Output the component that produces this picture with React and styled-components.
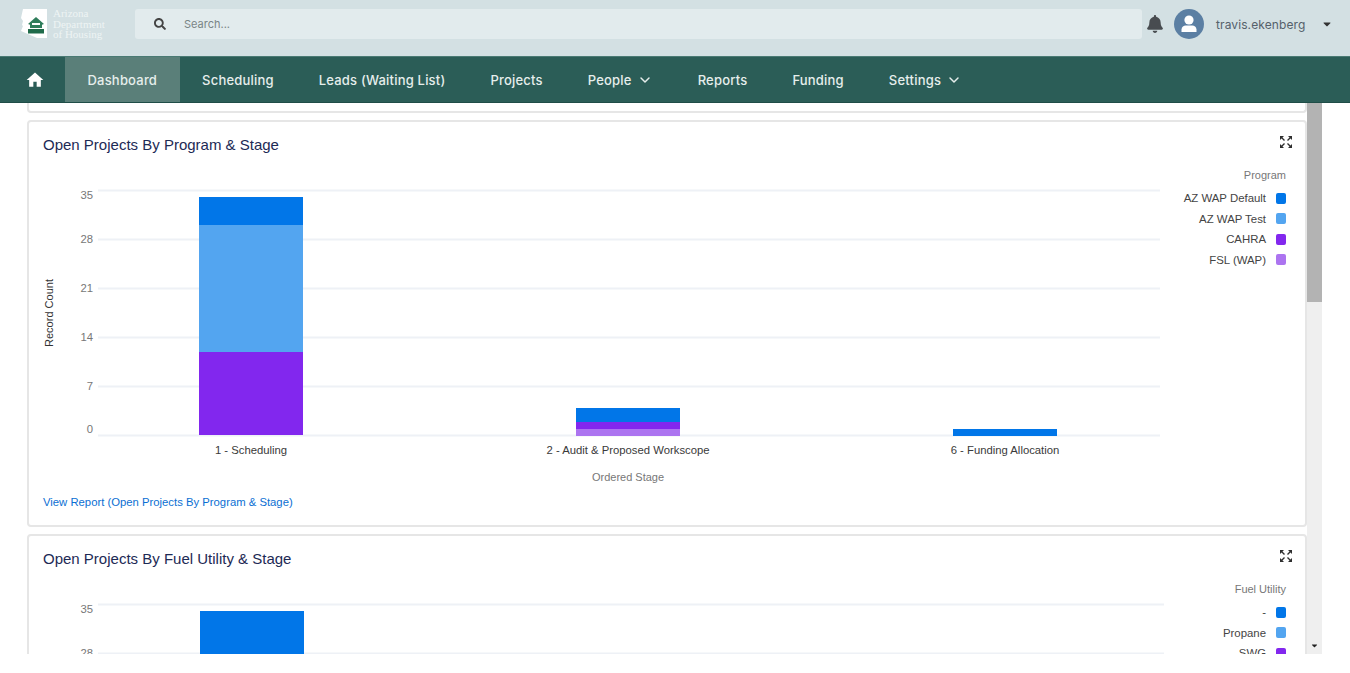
import React from 'react'
import styled, { createGlobalStyle } from 'styled-components'
import { FaSearch, FaBell, FaCaretDown } from 'react-icons/fa'
import { MdHome } from 'react-icons/md'
import { ChevronDown } from 'lucide-react'

const BLUE = '#0176e8'
const LIGHT = '#53a5f0'
const PURPLE = '#8227ee'
const LILAC = '#ac74f0'

const NAV = [
  { label: 'Dashboard', active: true },
  { label: 'Scheduling' },
  { label: 'Leads (Waiting List)' },
  { label: 'Projects' },
  { label: 'People', menu: true },
  { label: 'Reports' },
  { label: 'Funding' },
  { label: 'Settings', menu: true },
]

const CHARTS = [
  {
    title: 'Open Projects By Program & Stage',
    legendTitle: 'Program',
    legend: [
      ['AZ WAP Default', BLUE],
      ['AZ WAP Test', LIGHT],
      ['CAHRA', PURPLE],
      ['FSL (WAP)', LILAC],
    ],
    gridEnd: 1131,
    barShift: 0,
    bars: [
      { x: 170, label: '1 - Scheduling', parts: [[32, 28, BLUE], [60, 127, LIGHT], [187, 83, PURPLE]] },
      { x: 547, label: '2 - Audit & Proposed Workscope', parts: [[243, 14, BLUE], [257, 7, PURPLE], [264, 7, LILAC]] },
      { x: 924, label: '6 - Funding Allocation', parts: [[264, 7, BLUE]] },
    ],
    link: 'View Report (Open Projects By Program & Stage)',
  },
  {
    title: 'Open Projects By Fuel Utility & Stage',
    legendTitle: 'Fuel Utility',
    legend: [
      ['-', BLUE],
      ['Propane', LIGHT],
      ['SWG', PURPLE],
    ],
    gridEnd: 1135,
    barShift: 1,
    bars: [{ x: 170, label: '1 - Scheduling', parts: [[32, 238, BLUE]] }],
    link: 'View Report (Open Projects By Fuel Utility & Stage)',
  },
]

const GRID = [
  [25, '35', 34],
  [74, '28', 78],
  [123, '21', 127],
  [172, '14', 176],
  [221, '7', 225],
  [270, '0', 268],
]

const Logo = () => (
  <LogoWrap>
    <svg width='28' height='30' viewBox='0 0 28 30'>
      <path d='M3 0h24v29H17L1 22l2-5-1-1 1-4-2-3z' fill='#fff' />
      <path d='M8 15l8-7 8 7-2 .8V19H10v-3.200z' fill='#2f7d5b' />
      <path d='M12 14h8v2h-8z' fill='#fff' />
      <path d='M8 20h16v4.500H8z' fill='#1f6b4a' />
    </svg>
    <LogoText>
      Arizona
      <br />
      Department
      <br />
      of Housing
    </LogoText>
  </LogoWrap>
)

const Avatar = () => (
  <svg width='30' height='30' viewBox='0 0 30 30'>
    <circle cx='15' cy='15' r='15' fill='#5b7fa3' />
    <circle cx='15' cy='11' r='4.6' fill='#fff' />
    <path d='M7.500 23v-2.500c0-2.600 2.500-4 4-4h7c1.500 0 4 1.400 4 4V23z' fill='#fff' />
  </svg>
)

const ExpandIcon = () => (
  <svg width='12' height='12' viewBox='0 0 12 12' fill='#2f2f2f' stroke='#2f2f2f'>
    <path d='M0 0h4L0 4zM12 0v4L8 0zM0 12V8l4 4zM12 12H8l4-4z' stroke='none' />
    <path d='M1 1l3.500 3.500M11 1L7.500 4.500M1 11l3.500-3.500M11 11L7.500 7.500' strokeWidth='1.400' />
  </svg>
)

const BarChart = ({ bars, gridEnd, barShift }) => (
  <ChartSvg viewBox='0 0 1150 322'>
    {GRID.map(([y, label, labelY]) => (
      <g key={y}>
        <line x1='69' x2={gridEnd} y1={y + 0.5} y2={y + 0.5} stroke='#eef1f6' strokeWidth='2' />
        <text x='64' y={labelY} textAnchor='end' fontSize='11.3' fill='#777'>
          {label}
        </text>
      </g>
    ))}
    {bars.map((bar) => (
      <g key={bar.label}>
        {bar.parts.map(([y, h, color]) => (
          <rect key={y} x={bar.x + barShift} y={y} width='104' height={h} fill={color} />
        ))}
        <text x={bar.x + barShift + 52} y='289' textAnchor='middle' fontSize='11.3' fill='#3a3a3a'>
          {bar.label}
        </text>
      </g>
    ))}
    <text x='599' y='316' textAnchor='middle' fontSize='11' fill='#777'>
      Ordered Stage
    </text>
    <text transform='translate(24 148) rotate(-90)' textAnchor='middle' fontSize='11' fill='#333'>
      Record Count
    </text>
  </ChartSvg>
)

const App = () => {
  return (
    <Page>
      <GlobalStyle />
      <Header>
        <Logo />
        <SearchBar>
          <FaSearch size={12} color='#444' />
          <span>Search...</span>
        </SearchBar>
        <FaBell size={18} color='#484c50' />
        <AvatarSlot>
          <Avatar />
        </AvatarSlot>
        <UserName>travis.ekenberg</UserName>
        <FaCaretDown size={12} color='#333' />
      </Header>
      <Nav>
        <HomeItem>
          <MdHome size={20} color='#fff' />
        </HomeItem>
        {NAV.map((item) => (
          <NavItem key={item.label} $active={item.active}>
            {item.label}
            {item.menu && <ChevronDown size={16} strokeWidth={2.2} />}
          </NavItem>
        ))}
      </Nav>
      <Body>
        <Scroller>
          <CutCard />
          {CHARTS.map((chart) => (
            <Card key={chart.title}>
              <CardHead>
                <h2>{chart.title}</h2>
                <ExpandIcon />
              </CardHead>
              <ChartRow>
                <BarChart {...chart} />
                <Legend>
                  <h3>{chart.legendTitle}</h3>
                  {chart.legend.map(([name, color]) => (
                    <LegendRow key={name}>
                      {name}
                      <Swatch $color={color} />
                    </LegendRow>
                  ))}
                </Legend>
              </ChartRow>
              <ReportLink href='#'>{chart.link}</ReportLink>
            </Card>
          ))}
        </Scroller>
        <ScrollTrack>
          <ScrollThumb />
          <FaCaretDown size={9} color='#222' />
        </ScrollTrack>
      </Body>
    </Page>
  )
}

const GlobalStyle = createGlobalStyle`
  * {
    box-sizing: border-box;
  }
  html, body {
    margin: 0;
    background: #fff;
  }
`

const Page = styled.div`
  width: 1350px;
  height: 654px;
  display: flex;
  flex-direction: column;
  overflow: hidden;
  font-family: 'Liberation Sans', Arial, sans-serif;
`

const Header = styled.header`
  height: 56px;
  flex: none;
  display: flex;
  align-items: center;
  padding: 0 17px 8px 20px;
  background: #d3e0e3;
  svg {
    flex: none;
  }
`

const LogoWrap = styled.div`
  flex: none;
  width: 115px;
  display: flex;
  align-items: center;
  gap: 5px;
`

const LogoText = styled.div`
  font-family: 'Liberation Serif', serif;
  font-size: 11px;
  line-height: 10.5px;
  color: #eef4f4;
`

const SearchBar = styled.div`
  flex: none;
  width: 1007px;
  height: 30px;
  display: flex;
  align-items: center;
  gap: 18px;
  padding-left: 19px;
  margin-right: 4px;
  border-radius: 3px;
  background: #e2ebed;
  font-family: Inter, sans-serif;
  font-size: 11px;
  color: #7a8586;
`

const AvatarSlot = styled.div`
  display: flex;
  margin-left: 10px;
`

const UserName = styled.span`
  flex: none;
  width: 105px;
  margin-left: 12px;
  font-family: Inter, sans-serif;
  font-size: 12px;
  letter-spacing: 0.1px;
  color: #55616b;
  white-space: nowrap;
`

const Nav = styled.nav`
  height: 47px;
  flex: none;
  display: flex;
  background: #2b5d57;
  border-top: 1px solid #4a7a74;
  border-bottom: 1px solid #1f4d47;
`

const HomeItem = styled.div`
  width: 65px;
  padding-left: 4px;
  display: flex;
  align-items: center;
  justify-content: center;
`

const NavItem = styled.a`
  display: flex;
  align-items: center;
  gap: 5px;
  padding: 0 22.500px;
  background: ${(p) => (p.$active ? '#5a7f79' : 'transparent')};
  font-family: Inter, sans-serif;
  font-size: 13px;
  font-weight: 500;
  letter-spacing: 0.2px;
  color: #e6eeec;
  white-space: nowrap;
`

const Body = styled.main`
  flex: 1;
  min-height: 0;
  display: flex;
`

const Scroller = styled.div`
  width: 1307px;
  padding-left: 27px;
  overflow: hidden;
  display: flex;
  flex-direction: column;
  gap: 7px;
`

const CutCard = styled.div`
  flex: none;
  height: 10px;
  background: #fff;
  border: 2px solid #e6e6e6;
  border-top: 0;
  border-radius: 0 0 4px 4px;
`

const Card = styled.section`
  flex: none;
  height: 407px;
  display: flex;
  flex-direction: column;
  border: 2px solid #e6e6e6;
  border-radius: 4px;
  background: #fff;
`

const CardHead = styled.div`
  height: 43px;
  flex: none;
  display: flex;
  justify-content: space-between;
  align-items: flex-start;
  padding: 14px 13px 0 14px;
  h2 {
    margin: 0;
    font-size: 15px;
    line-height: 18px;
    font-weight: 400;
    color: #1d2a55;
  }
`

const ChartRow = styled.div`
  flex: none;
  display: flex;
  height: 322px;
`

const ChartSvg = styled.svg`
  width: 1150px;
  height: 322px;
  flex: none;
  font-family: 'Liberation Sans', Arial, sans-serif;
`

const Legend = styled.aside`
  flex: 1;
  padding-right: 19px;
  display: flex;
  flex-direction: column;
  align-items: flex-end;
  font-size: 11.4px;
  color: #444;
  h3 {
    margin: 3px 0 6px;
    font-size: 11px;
    line-height: 14px;
    font-weight: 400;
    color: #777;
  }
`

const LegendRow = styled.div`
  height: 20.500px;
  display: flex;
  align-items: center;
  gap: 10px;
  white-space: nowrap;
`

const Swatch = styled.i`
  width: 10px;
  height: 11px;
  border-radius: 2px;
  background: ${(p) => p.$color};
`

const ReportLink = styled.a`
  margin: 8px 0 0 14px;
  font-size: 11.3px;
  line-height: 14px;
  color: #0b6fd3;
  text-decoration: none;
`

const ScrollTrack = styled.div`
  position: relative;
  width: 15px;
  flex: none;
  background: #efefef;
  svg {
    position: absolute;
    left: 3px;
    bottom: 4px;
  }
`

const ScrollThumb = styled.div`
  height: 199px;
  background: #b3b3b3;
`

export default App
